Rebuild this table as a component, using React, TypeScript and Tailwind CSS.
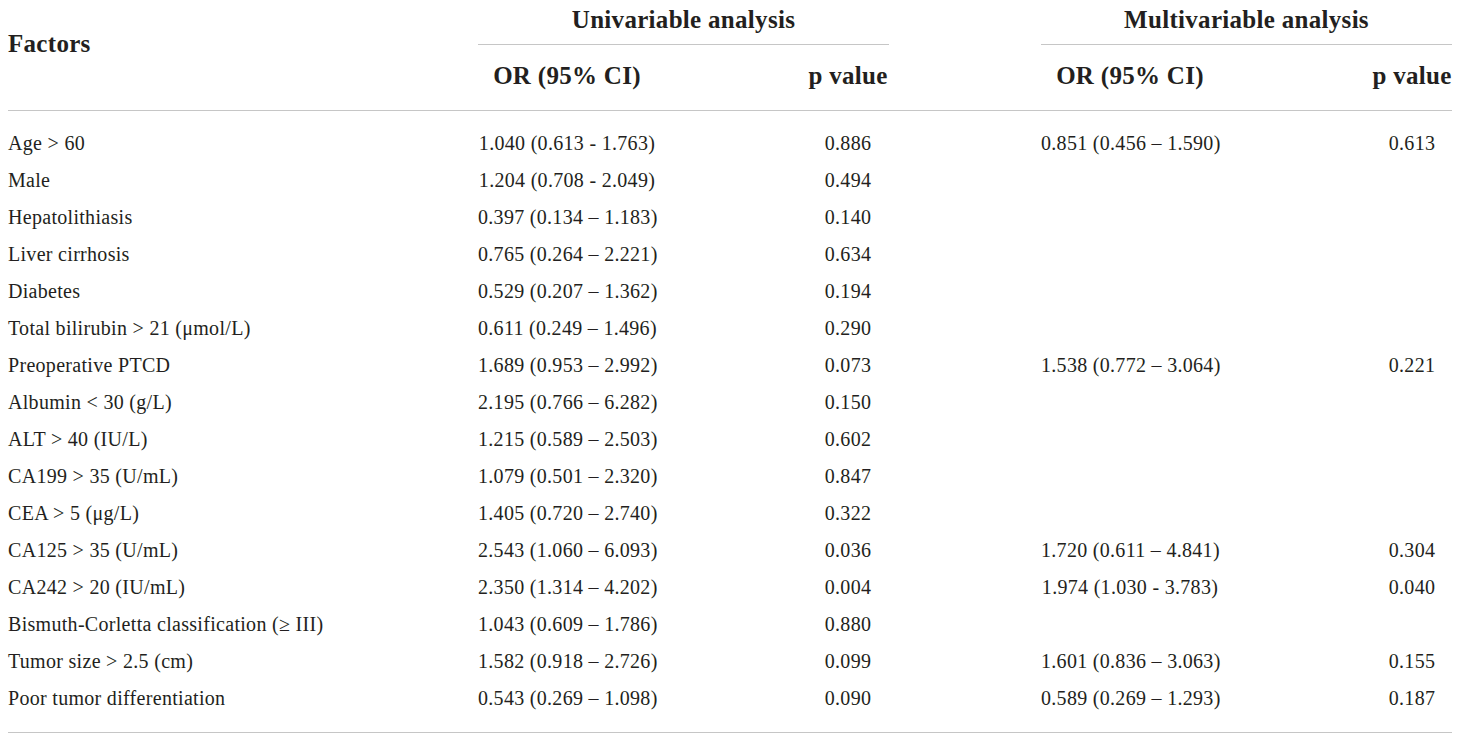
import React from 'react';

type Row = {
  factor: string;
  uniOr: string;
  uniP: string;
  multiOr?: string;
  multiP?: string;
};

const rows: Row[] = [
  { factor: 'Age > 60', uniOr: '1.040 (0.613 - 1.763)', uniP: '0.886', multiOr: '0.851 (0.456 – 1.590)', multiP: '0.613' },
  { factor: 'Male', uniOr: '1.204 (0.708 - 2.049)', uniP: '0.494' },
  { factor: 'Hepatolithiasis', uniOr: '0.397 (0.134 – 1.183)', uniP: '0.140' },
  { factor: 'Liver cirrhosis', uniOr: '0.765 (0.264 – 2.221)', uniP: '0.634' },
  { factor: 'Diabetes', uniOr: '0.529 (0.207 – 1.362)', uniP: '0.194' },
  { factor: 'Total bilirubin > 21 (μmol/L)', uniOr: '0.611 (0.249 – 1.496)', uniP: '0.290' },
  { factor: 'Preoperative PTCD', uniOr: '1.689 (0.953 – 2.992)', uniP: '0.073', multiOr: '1.538 (0.772 – 3.064)', multiP: '0.221' },
  { factor: 'Albumin < 30 (g/L)', uniOr: '2.195 (0.766 – 6.282)', uniP: '0.150' },
  { factor: 'ALT > 40 (IU/L)', uniOr: '1.215 (0.589 – 2.503)', uniP: '0.602' },
  { factor: 'CA199 > 35 (U/mL)', uniOr: '1.079 (0.501 – 2.320)', uniP: '0.847' },
  { factor: 'CEA > 5 (μg/L)', uniOr: '1.405 (0.720 – 2.740)', uniP: '0.322' },
  { factor: 'CA125 > 35 (U/mL)', uniOr: '2.543 (1.060 – 6.093)', uniP: '0.036', multiOr: '1.720 (0.611 – 4.841)', multiP: '0.304' },
  { factor: 'CA242 > 20 (IU/mL)', uniOr: '2.350 (1.314 – 4.202)', uniP: '0.004', multiOr: '1.974 (1.030 - 3.783)', multiP: '0.040' },
  { factor: 'Bismuth-Corletta classification (≥ III)', uniOr: '1.043 (0.609 – 1.786)', uniP: '0.880' },
  { factor: 'Tumor size > 2.5 (cm)', uniOr: '1.582 (0.918 – 2.726)', uniP: '0.099', multiOr: '1.601 (0.836 – 3.063)', multiP: '0.155' },
  { factor: 'Poor tumor differentiation', uniOr: '0.543 (0.269 – 1.098)', uniP: '0.090', multiOr: '0.589 (0.269 – 1.293)', multiP: '0.187' },
];

const cols = 'grid grid-cols-[470px_178px_151px_82px_152px_178px_153px_80px]';

const App = () => {
  return (
    <div className="min-h-screen w-full bg-white text-[#231f20] font-['Liberation_Serif',serif]">
      <div className="ml-[8px] w-[1444px]">
        {/* Header */}
        <div className={`${cols} border-b border-[#c6c6c6] text-[25px] font-bold tracking-[0.3px] leading-[30px]`}>
          <div className="row-span-2 pt-[29px]">Factors</div>
          <div className="col-span-3 col-start-2 pt-[5px] pb-[9px] text-center border-b border-[#c6c6c6]">
            Univariable analysis
          </div>
          <div className="col-span-3 col-start-6 pt-[5px] pb-[9px] text-center border-b border-[#c6c6c6]">
            Multivariable analysis
          </div>
          <div className="col-start-2 pt-[16px] pb-[19px] text-center whitespace-nowrap">OR (95% CI)</div>
          <div className="col-start-4 pt-[16px] pb-[19px] text-center whitespace-nowrap">p value</div>
          <div className="col-start-6 pt-[16px] pb-[19px] text-center whitespace-nowrap">OR (95% CI)</div>
          <div className="col-start-8 pt-[16px] pb-[19px] text-center whitespace-nowrap">p value</div>
        </div>

        {/* Body */}
        <div className="pt-[14px] pb-[15px] border-b border-[#c6c6c6] text-[20px] tracking-[0.3px]">
          {rows.map((r, i) => (
            <div key={i} className={`${cols} h-[37px] leading-[37px] whitespace-nowrap`}>
              <div>{r.factor}</div>
              <div className="text-center">{r.uniOr}</div>
              <div />
              <div className="text-center">{r.uniP}</div>
              <div />
              <div className="text-center">{r.multiOr ?? ''}</div>
              <div />
              <div className="text-center">{r.multiP ?? ''}</div>
            </div>
          ))}
        </div>
      </div>
    </div>
  );
};

export default App;
